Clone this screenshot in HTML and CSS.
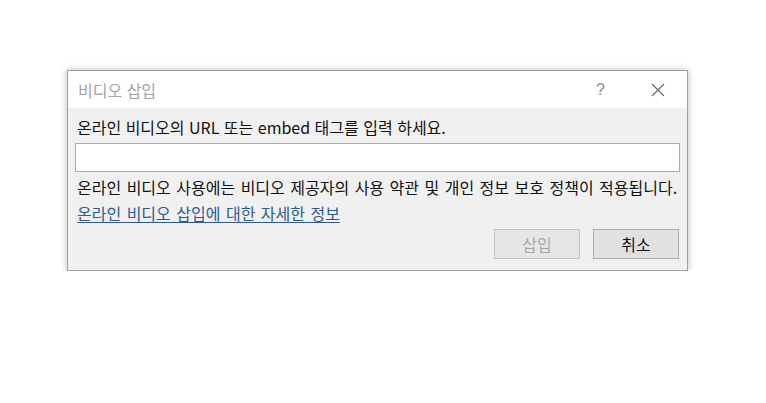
FILE: index.html
```html
<!DOCTYPE html>
<html lang="ko">
<head>
    <meta charset="UTF-8">
    <meta name="viewport" content="width=device-width, initial-scale=1.0">
    <title>비디오 삽입</title>
    <link rel="stylesheet" href="styles.css">
</head>
<body>
    <div class="dialog">
        <div class="title-bar">
            <span class="title">비디오 삽입</span>
            <span class="help-btn">?</span>
            <span class="close-btn">
                <svg width="14" height="14" viewBox="0 0 14 14">
                    <path d="M1 1 L13 13 M13 1 L1 13" stroke="#666" stroke-width="1.1" fill="none"/>
                </svg>
            </span>
        </div>

        <div class="dialog-body">
            <div class="prompt">온라인 비디오의 URL 또는 embed 태그를 입력 하세요.</div>
            <input type="text" class="url-input">
            <div class="notice">온라인 비디오 사용에는 비디오 제공자의 사용 약관 및 개인 정보 보호 정책이 적용됩니다.</div>
            <a href="#" class="info-link">온라인 비디오 삽입에 대한 자세한 정보</a>
            <div class="buttons">
                <button type="button" class="insert-btn" disabled>삽입</button>
                <button type="button" class="cancel-btn">취소</button>
            </div>
        </div>
    </div>
</body>
</html>
```

FILE: styles.css
```css
body {
    margin: 0;
    background-color: white;
    font-family: "Noto Sans CJK KR", "Noto Sans", sans-serif;
    font-size: 16px;
}

.dialog {
    width: 619px;
    margin: 70px 0 0 67px;
    border: 1px solid #a0a0a0;
    background-color: #f0f0f0;
    box-shadow: 0 0 7px rgba(0, 0, 0, 0.28);
}

.title-bar {
    height: 37px;
    background-color: white;
    display: flex;
    align-items: center;
    padding-left: 10px;
}

.title {
    flex: 1;
    color: #a3a3a3;
    font-size: 16px;
}

.help-btn {
    width: 55px;
    color: #8a8a8a;
    font-family: "Liberation Sans", sans-serif;
    font-size: 16px;
}

.close-btn {
    width: 36px;
    display: flex;
    align-items: center;
}

.dialog-body {
    padding: 9px 7px 11px 7px;
    display: flex;
    flex-direction: column;
}

.prompt,
.notice,
.info-link {
    height: 20px;
    line-height: 20px;
    padding-left: 2px;
    color: #111;
    white-space: nowrap;
}

.notice {
    margin-top: 5px;
    word-spacing: 1px;
}

.url-input {
    margin-top: 6px;
    height: 29px;
    width: 100%;
    box-sizing: border-box;
    border: 1px solid #a9a9a9;
    background: white;
}

.info-link {
    margin-top: 6px;
    color: #2d5b90;
    text-decoration: underline;
    text-underline-offset: 2px;
    word-spacing: 1px;
    align-self: flex-start;
}

.buttons {
    margin-top: 6px;
    display: flex;
    justify-content: flex-end;
    gap: 13px;
    padding-right: 1px;
}

button {
    width: 86px;
    height: 30px;
    font-family: inherit;
    font-size: 16px;
    border: 1px solid #adadad;
    background-color: #e1e1e1;
    color: #111;
    padding: 0;
}

.insert-btn {
    border-color: #c4c4c4;
    background-color: #e6e6e6;
    color: #a6a6a6;
}
```
